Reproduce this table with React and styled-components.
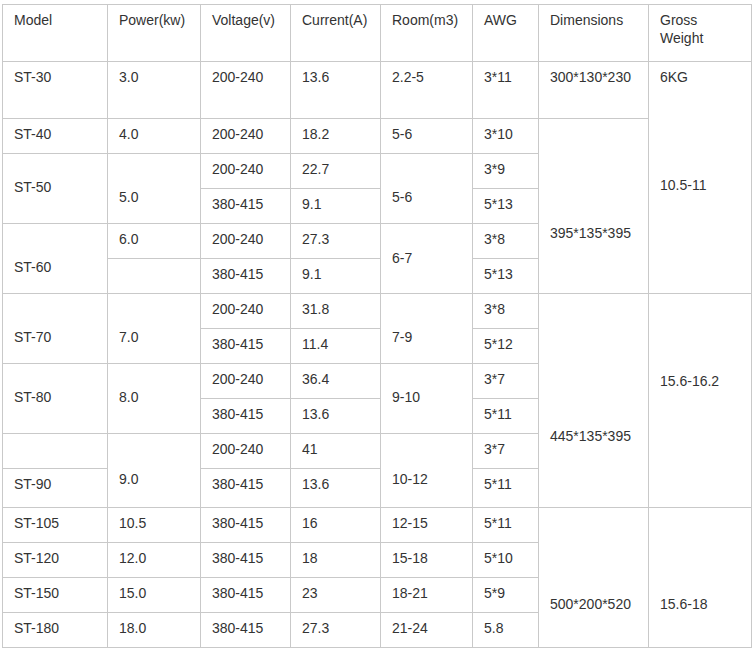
import React from "react";
import styled, { createGlobalStyle } from "styled-components";

const Global = createGlobalStyle`
  html, body { margin: 0; padding: 0; background: #ffffff; }
  body { font-family: "Liberation Sans", Arial, sans-serif; }
`;

const Grid = styled.div`
  display: grid;
  grid-template-columns: 104px 92px 89px 89px 91px 65px 109px 102px;
  grid-template-rows: 56px 56px repeat(10, 34px) 38px repeat(4, 34px);
  gap: 1px;
  width: max-content;
  margin: 4px 0 0 2px;
  border: 1px solid #c9c9c9;
  background: #c9c9c9;
`;

const Cell = styled.div`
  grid-column: ${(p) => p.$c};
  grid-row: ${(p) => p.$r} / span ${(p) => p.$rs || 1};
  background: #ffffff;
  padding: ${(p) => 6 + (p.$off || 0)}px 10px 0 11px;
  font-size: 14px;
  line-height: 18px;
  color: #333333;
  overflow: hidden;
`;

const Line = styled.div`
  margin-top: ${(p) => p.$gap || 0}px;
`;

const header = ["Model", "Power(kw)", "Voltage(v)", "Current(A)", "Room(m3)", "AWG", "Dimensions", ["Gross", "Weight"]];

const cells = [
  // ST-30
  { r: 2, c: 1, t: "ST-30" },
  { r: 2, c: 2, t: "3.0" },
  { r: 2, c: 3, t: "200-240" },
  { r: 2, c: 4, t: "13.6" },
  { r: 2, c: 5, t: "2.2-5" },
  { r: 2, c: 6, t: "3*11" },
  { r: 2, c: 7, t: "300*130*230" },
  { r: 2, c: 8, rs: 6, lines: [["6KG", 0], ["10.5-11", 90]] },
  // ST-40
  { r: 3, c: 1, t: "ST-40" },
  { r: 3, c: 2, t: "4.0" },
  { r: 3, c: 3, t: "200-240" },
  { r: 3, c: 4, t: "18.2" },
  { r: 3, c: 5, t: "5-6" },
  { r: 3, c: 6, t: "3*10" },
  { r: 3, c: 7, rs: 5, t: "395*135*395", off: 99 },
  // ST-50
  { r: 4, c: 1, rs: 2, t: "ST-50", off: 18 },
  { r: 4, c: 2, rs: 2, t: "5.0", off: 28 },
  { r: 4, c: 3, t: "200-240" },
  { r: 5, c: 3, t: "380-415" },
  { r: 4, c: 4, t: "22.7" },
  { r: 5, c: 4, t: "9.1" },
  { r: 4, c: 5, rs: 2, t: "5-6", off: 28 },
  { r: 4, c: 6, t: "3*9" },
  { r: 5, c: 6, t: "5*13" },
  // ST-60
  { r: 6, c: 1, rs: 2, t: "ST-60", off: 28 },
  { r: 6, c: 2, t: "6.0" },
  { r: 7, c: 2, t: "" },
  { r: 6, c: 3, t: "200-240" },
  { r: 7, c: 3, t: "380-415" },
  { r: 6, c: 4, t: "27.3" },
  { r: 7, c: 4, t: "9.1" },
  { r: 6, c: 5, rs: 2, t: "6-7", off: 19 },
  { r: 6, c: 6, t: "3*8" },
  { r: 7, c: 6, t: "5*13" },
  // ST-70
  { r: 8, c: 1, rs: 2, t: "ST-70", off: 28 },
  { r: 8, c: 2, rs: 2, t: "7.0", off: 28 },
  { r: 8, c: 3, t: "200-240" },
  { r: 9, c: 3, t: "380-415" },
  { r: 8, c: 4, t: "31.8" },
  { r: 9, c: 4, t: "11.4" },
  { r: 8, c: 5, rs: 2, t: "7-9", off: 28 },
  { r: 8, c: 6, t: "3*8" },
  { r: 9, c: 6, t: "5*12" },
  { r: 8, c: 7, rs: 6, t: "445*135*395", off: 127 },
  { r: 8, c: 8, rs: 6, t: "15.6-16.2", off: 72 },
  // ST-80
  { r: 10, c: 1, rs: 2, t: "ST-80", off: 18 },
  { r: 10, c: 2, rs: 2, t: "8.0", off: 18 },
  { r: 10, c: 3, t: "200-240" },
  { r: 11, c: 3, t: "380-415" },
  { r: 10, c: 4, t: "36.4" },
  { r: 11, c: 4, t: "13.6" },
  { r: 10, c: 5, rs: 2, t: "9-10", off: 18 },
  { r: 10, c: 6, t: "3*7" },
  { r: 11, c: 6, t: "5*11" },
  // ST-90
  { r: 12, c: 1, t: "" },
  { r: 13, c: 1, t: "ST-90" },
  { r: 12, c: 2, rs: 2, t: "9.0", off: 30 },
  { r: 12, c: 3, t: "200-240" },
  { r: 13, c: 3, t: "380-415" },
  { r: 12, c: 4, t: "41" },
  { r: 13, c: 4, t: "13.6" },
  { r: 12, c: 5, rs: 2, t: "10-12", off: 30 },
  { r: 12, c: 6, t: "3*7" },
  { r: 13, c: 6, t: "5*11" },
  // ST-105..180
  { r: 14, c: 1, t: "ST-105" },
  { r: 14, c: 2, t: "10.5" },
  { r: 14, c: 3, t: "380-415" },
  { r: 14, c: 4, t: "16" },
  { r: 14, c: 5, t: "12-15" },
  { r: 14, c: 6, t: "5*11" },
  { r: 14, c: 7, rs: 4, t: "500*200*520", off: 81 },
  { r: 14, c: 8, rs: 4, t: "15.6-18", off: 81 },
  { r: 15, c: 1, t: "ST-120" },
  { r: 15, c: 2, t: "12.0" },
  { r: 15, c: 3, t: "380-415" },
  { r: 15, c: 4, t: "18" },
  { r: 15, c: 5, t: "15-18" },
  { r: 15, c: 6, t: "5*10" },
  { r: 16, c: 1, t: "ST-150" },
  { r: 16, c: 2, t: "15.0" },
  { r: 16, c: 3, t: "380-415" },
  { r: 16, c: 4, t: "23" },
  { r: 16, c: 5, t: "18-21" },
  { r: 16, c: 6, t: "5*9" },
  { r: 17, c: 1, t: "ST-180" },
  { r: 17, c: 2, t: "18.0" },
  { r: 17, c: 3, t: "380-415" },
  { r: 17, c: 4, t: "27.3" },
  { r: 17, c: 5, t: "21-24" },
  { r: 17, c: 6, t: "5.8" },
];

export default function App() {
  return (
    <>
      <Global />
      <Grid>
        {header.map((h, i) => (
          <Cell key={"h" + i} $r={1} $c={i + 1}>
            {Array.isArray(h) ? h.map((l) => <Line key={l}>{l}</Line>) : h}
          </Cell>
        ))}
        {cells.map((cell, i) => (
          <Cell key={i} $r={cell.r} $c={cell.c} $rs={cell.rs} $off={cell.off}>
            {cell.lines
              ? cell.lines.map(([txt, g]) => (
                  <Line key={txt} $gap={g}>
                    {txt}
                  </Line>
                ))
              : cell.t}
          </Cell>
        ))}
      </Grid>
    </>
  );
}
